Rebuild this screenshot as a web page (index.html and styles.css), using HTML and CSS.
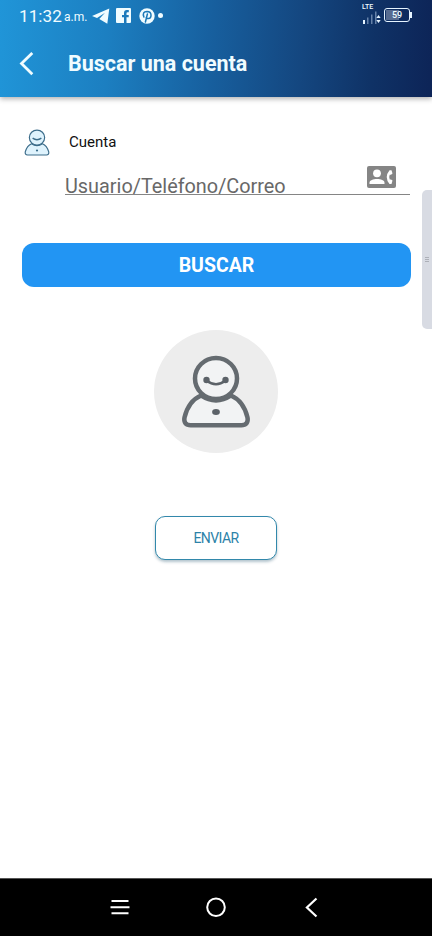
FILE: index.html
```html
<!DOCTYPE html>
<html lang="es">
<head>
<meta charset="utf-8">
<meta name="viewport" content="width=device-width, initial-scale=1">
<title>Buscar una cuenta</title>
<link rel="stylesheet" href="styles.css">
</head>
<body>
<header class="header">
  <div class="status">
    <span class="time">11:32</span><span class="ampm">a.m.</span>
    <svg class="telegram" width="18" height="16" viewBox="0 0 18 16"><path d="M17.300.6 0 8l5 1.900 8-5.200-5.700 6.200 8 4.800z" fill="#f0fcff"/></svg>
    <svg class="facebook" width="15" height="15" viewBox="0 0 15 15"><path fill="#f0fcff" fill-rule="evenodd" d="M1 0h13a1 1 0 0 1 1 1v13a1 1 0 0 1-1 1h-3.500V9.200h2.200V7h-2.200V5.300q0-1.100 1.100-1.100h1.200V2h-2Q8 2 8 5v2H6v2.200h2V15H1a1 1 0 0 1-1-1V1a1 1 0 0 1 1-1z"/></svg>
    <svg class="pinterest" width="16" height="16" viewBox="0 0 16 16" fill="none" stroke-linecap="round"><circle cx="8" cy="8" r="7.700" fill="#f0fcff"/><path d="M4.900 9Q2.900 3.600 8 3.400c5.500 0 4.800 7 1.200 7.200q-1.300 0-2-1M8.400 6 6.400 14" stroke="#1b78b7" stroke-width="1.500"/></svg>
    <i class="dot"></i>
    <div class="signal">
      <span class="lte">LTE</span>
      <svg width="19" height="13" viewBox="0 0 19 13"><path d="M1 9h2v4H1z" fill="#e6f4ff"/><path d="M5 6.500h1.500V13H5zM9 3.500h1.500V13H9zM13 .5h1.500V13H13z" fill="#6581a9"/><path d="m16.500 4 2.200 3h-4.400zm0 8 2.200-3h-4.400z" fill="#e6f4ff"/></svg>
    </div>
    <div class="battery"><span>59</span></div>
    <i class="battery-tip"></i>
  </div>
  <div class="appbar">
    <svg width="16" height="24" viewBox="0 0 16 24"><path d="M14.300 1 3.500 11.600l10.800 10.600" fill="none" stroke="#f0fcff" stroke-width="2.800"/></svg>
    <h1>Buscar una cuenta</h1>
  </div>
</header>
<main class="content">
  <div class="account">
    <svg class="person small" width="26" height="27" viewBox="0 0 70 74">
      <path class="body" d="M20 40.500C12 44 6 52 2.800 62.500c-1 5.500 1.500 8.700 6.200 8.700h52c4.700 0 7.200-3.200 6.200-8.700C64 52 58 44 50 40.500q-15 10-30 0z"/>
      <ellipse class="head" cx="35" cy="23.500" rx="21" ry="20.500"/>
      <path class="smile" d="M23 25q12 9 24 0"/>
      <circle class="mark" cx="35" cy="59" r="3"/>
    </svg>
    <span class="label">Cuenta</span>
  </div>
  <div class="field">
    <span class="placeholder">Usuario/Teléfono/Correo</span>
    <svg width="29" height="22" viewBox="0 0 29 22"><rect width="29" height="22" rx="2" fill="#858585"/><circle cx="10" cy="7.300" r="3.900" fill="#fff"/><path d="M2.500 18v-1.300c0-5 15-5 15 0V18z" fill="#fff"/><path d="M22.500 4.200h2l1 3.400-1.500 1.200h-1.300q-1 2.300 0 4.600H24l1.500 1.200-1 3.400h-2q-5.600-6.900 0-13.800z" fill="#fff"/></svg>
  </div>
  <button class="search">BUSCAR</button>
  <div class="avatar">
    <svg class="person" width="70" height="74" viewBox="0 0 70 74">
      <path class="body" d="M20 40.500C12 44 6 52 3.500 62.500c-1 5 1.500 7.700 6.200 7.700h50.600c4.700 0 7.200-2.700 6.200-7.700C64 52 58 44 50 40.500q-15 10-30 0z"/>
      <ellipse class="head" cx="35" cy="23.500" rx="21" ry="20.500"/>
      <path class="smile" d="M25.500 25.500q9.500 7.500 19 0"/>
      <circle class="mark" cx="25.500" cy="25" r="3.200"/><circle class="mark" cx="44.500" cy="25" r="3.200"/>
      <ellipse class="mark" cx="35" cy="57" rx="3.900" ry="2.900"/>
    </svg>
  </div>
  <button class="send">ENVIAR</button>
</main>
<div class="edge-handle"><i></i><i></i><i></i></div>
<nav class="navbar">
  <svg width="20" height="20" viewBox="0 0 20 20"><path d="M1.500 3h17M.5 9.300h19M1.500 15.300h17" stroke="#fff" stroke-width="2"/></svg>
  <svg width="20" height="20" viewBox="0 0 20 20"><circle cx="10" cy="9.300" r="8.800" fill="none" stroke="#fff" stroke-width="2"/></svg>
  <svg width="20" height="20" viewBox="0 0 20 20"><path d="M14.500.5 4.900 9.500l9.600 9" fill="none" stroke="#fff" stroke-width="2.200"/></svg>
</nav>
</body>
</html>
```
FILE: styles.css
```css
* { box-sizing: border-box; }
body {
  margin: 0;
  height: 936px;
  display: flex;
  flex-direction: column;
  overflow: hidden;
  background: #fff;
  font-family: Roboto, sans-serif;
}
svg { display: block; flex: none; overflow: visible; }
.header {
  height: 97px;
  flex: none;
  color: #f0fcff;
  background: linear-gradient(93deg, #2095d8 0%, #1c7fc1 25%, #175f9e 49%, #14467f 70%, #0f3266 86%, #0d2457 100%);
  box-shadow: 0 2px 5px rgba(0, 0, 0, .3);
}
.status { height: 31px; display: flex; align-items: center; padding-left: 19px; }
.time { width: 45px; font-size: 17.200px; line-height: 20px; }
.ampm { width: 28px; font-size: 12px; line-height: 14px; padding-top: 3px; }
.facebook { margin-left: 6px; }
.pinterest { margin-left: 8px; }
.dot { width: 5px; height: 5px; border-radius: 50%; margin-left: 3px; background: #f0fcff; }
.signal { width: 19px; height: 20px; margin: -4px 0 0 199px; }
.lte { display: block; height: 7px; font-size: 7px; line-height: 7px; font-weight: 500; }
.battery {
  width: 26px; height: 14px; margin: -1px 0 0 3px; padding: 1px;
  border: 1.500px solid #e6f4ff; border-radius: 3px;
}
.battery span {
  display: block; height: 10px; text-align: center; font-size: 9px; line-height: 10px; font-weight: 500;
  background: linear-gradient(90deg, #566b90 59%, transparent 59%);
}
.battery-tip { width: 2px; height: 6px; margin-top: -1px; background: #e6f4ff; }
.appbar { height: 66px; display: flex; align-items: center; padding: 0 0 1px 18px; }
h1 { margin: 1px 0 0 34px; font-size: 21.500px; font-weight: 700; line-height: 24px; white-space: nowrap; }
.content { flex: 1; padding: 31px 22px 0; }
.account { height: 28px; display: flex; align-items: center; padding-left: 2px; }
.label { margin-left: 19px; font-size: 15px; color: #111; }
.field {
  height: 39px; margin-left: 43px; display: flex; align-items: flex-end;
  justify-content: space-between; padding-right: 14px; border-bottom: 1px solid #858585;
}
.placeholder { font-size: 19.850px; line-height: 14px; color: #686868; }
.field svg { margin-bottom: 6px; }
.search {
  display: block; width: 389px; height: 44px; margin-top: 48px; padding: 0;
  border: 0; border-radius: 12px; background: #2295f3; color: #fff;
  font: 700 19.500px Roboto, sans-serif;
}
.avatar {
  width: 124px; height: 123px; margin: 43px auto 0; border-radius: 50%;
  display: flex; align-items: center; justify-content: center; background: #ededed;
}
.body, .head { fill: #f2f3f4; stroke: #656b70; stroke-width: 4.500px; }
.smile { fill: none; stroke: #5c6268; stroke-width: 2.500px; }
.mark { fill: #5c6268; }
.small .body, .small .head { fill: #dff3fd; stroke: #3b6c8a; stroke-width: 3.200px; }
.small .smile { stroke: #3b6c8a; stroke-width: 3.500px; }
.small .mark { fill: #3b6c8a; }
.send {
  display: block; width: 122px; height: 44px; margin: 63px auto 0; padding: 0;
  border: 1.500px solid #3288ab; border-radius: 10px; background: #fff;
  box-shadow: 0 2px 3px rgba(0, 60, 90, .3);
  color: #2c82a8; font: 400 14px Roboto, sans-serif; letter-spacing: -.6px;
}
.edge-handle {
  position: absolute; top: 190px; right: 0; width: 10px; height: 139px;
  border-radius: 5px 0 0 5px; background: #d8dbe3;
  display: flex; flex-direction: column; align-items: center; justify-content: center; gap: 1px;
}
.edge-handle i { width: 4px; height: 1px; background: #adb0b8; }
.navbar {
  height: 58px; flex: none; display: flex; justify-content: center; align-items: center;
  gap: 76px; border-top: 1px solid #555; background: #000;
}
```
